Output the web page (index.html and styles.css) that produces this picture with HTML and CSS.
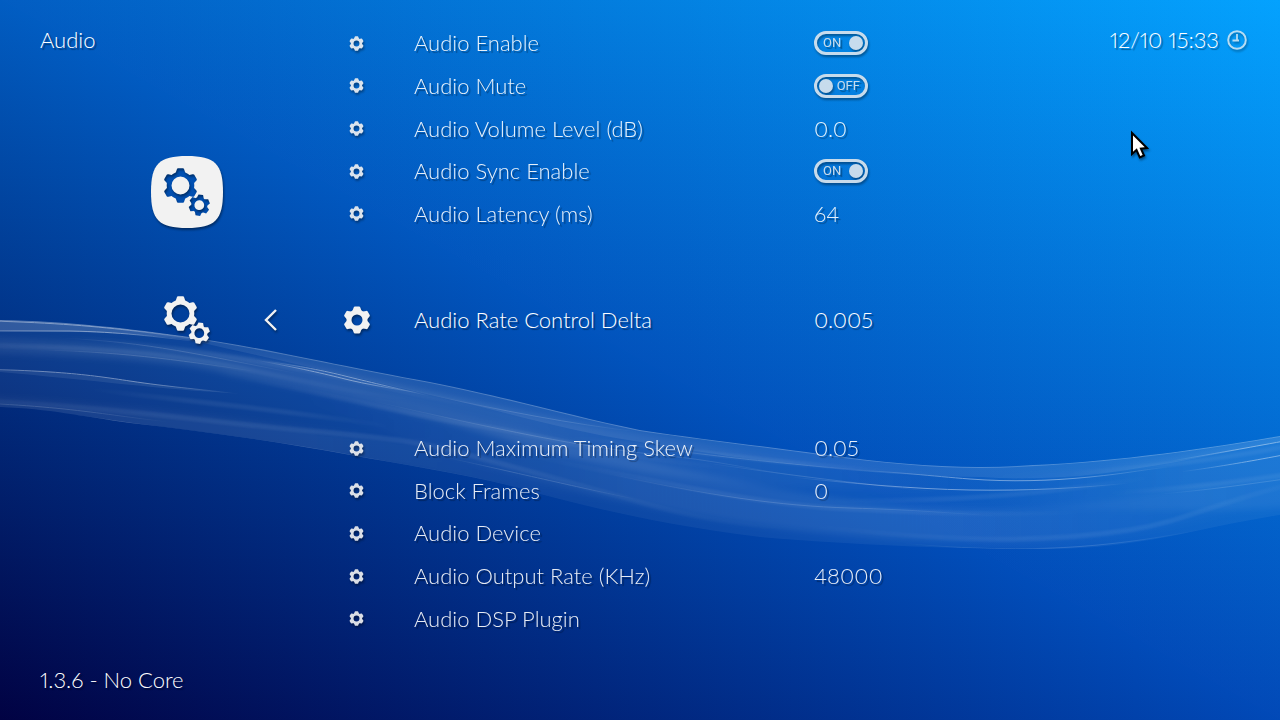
FILE: index.html
```
<!DOCTYPE html>
<html lang="en">
<head>
  <meta charset="UTF-8">
  <meta name="viewport" content="width=device-width, initial-scale=1.0">
  <title>Audio</title>
  <link rel="stylesheet" href="styles.css">
</head>
<body>
  <!-- shared icons -->
  <svg class="defs" aria-hidden="true">
    <symbol id="gear" viewBox="-14 -14 28 28">
      <circle r="8" fill="none" stroke="currentColor" stroke-width="5"/>
      <g fill="currentColor">
        <path id="tooth" d="M-5 -8L-3.300 -12.500Q-3 -13.500 -2 -13.500H2Q3 -13.500 3.300 -12.500L5 -8Z"/>
        <use href="#tooth" transform="rotate(60)"/>
        <use href="#tooth" transform="rotate(120)"/>
        <use href="#tooth" transform="rotate(180)"/>
        <use href="#tooth" transform="rotate(240)"/>
        <use href="#tooth" transform="rotate(300)"/>
      </g>
    </symbol>
    <symbol id="gears" viewBox="-36 -36 72 72">
      <g transform="translate(-6.500 -6.500)">
        <circle r="11.400" fill="none" stroke="currentColor" stroke-width="4.800"/>
        <g fill="currentColor">
          <path id="tooth-l" d="M-5 -12L-3.700 -16Q-3.400 -17.300 -2.400 -17.300H2.400Q3.400 -17.300 3.700 -16L5 -12Z"/>
          <use href="#tooth-l" transform="rotate(60)"/>
          <use href="#tooth-l" transform="rotate(120)"/>
          <use href="#tooth-l" transform="rotate(180)"/>
          <use href="#tooth-l" transform="rotate(240)"/>
          <use href="#tooth-l" transform="rotate(300)"/>
        </g>
      </g>
      <g transform="translate(12.300 13.200) rotate(8)">
        <circle r="6.500" fill="none" stroke="currentColor" stroke-width="3.200"/>
        <g fill="currentColor">
          <path id="tooth-s" d="M-3.500 -7L-2.300 -10.500H2.300L3.500 -7Z"/>
          <use href="#tooth-s" transform="rotate(60)"/>
          <use href="#tooth-s" transform="rotate(120)"/>
          <use href="#tooth-s" transform="rotate(180)"/>
          <use href="#tooth-s" transform="rotate(240)"/>
          <use href="#tooth-s" transform="rotate(300)"/>
        </g>
      </g>
    </symbol>
  </svg>

  <div class="wallpaper" aria-hidden="true">
    <div class="sky sky-low"></div>
    <div class="sky sky-high"></div>
    <svg class="ribbon" viewBox="0 0 1280 720" preserveAspectRatio="none">
      <defs>
        <filter id="soft" x="-5%" y="-20%" width="110%" height="140%"><feGaussianBlur stdDeviation="3"/></filter>
        <filter id="blur" x="-5%" y="-20%" width="110%" height="140%"><feGaussianBlur stdDeviation="1.200"/></filter>
        <linearGradient id="fade">
          <stop offset="0" stop-color="#fff" stop-opacity="0"/>
          <stop offset=".35" stop-color="#fff"/>
          <stop offset=".65" stop-color="#fff"/>
          <stop offset="1" stop-color="#fff" stop-opacity="0"/>
        </linearGradient>
        <clipPath id="wave">
          <path d="M0 320C70 321 130 329 190 337C270 349 330 364 430 382C520 400 570 416 640 430C700 439 770 447 820 454C880 462 930 467 980 467C1090 465 1180 453 1280 436V515C1200 527 1140 549 1050 549C960 549 870 546 760 537C670 526 600 510 540 494C480 476 410 466 350 455C270 440 200 431 130 423C80 416 50 409 0 407Z"/>
        </clipPath>
      </defs>
      <g clip-path="url(#wave)">
        <rect class="haze" width="1280" height="720"/>
        <!-- broad folds -->
        <g filter="url(#soft)" fill="url(#fade)">
          <path opacity=".1" d="M-300 330C-100 330 200 345 300 365C420 389 520 414 640 434C740 452 800 464 960 477L960 490C760 494 640 475 540 450C430 415 330 395 230 375C150 350 -100 352 -300 350Z"/>
          <path opacity=".07" d="M300 375C520 425 640 470 850 500C960 515 1080 515 1280 470V500C1160 535 1060 545 970 541C800 540 640 510 500 470C440 455 380 430 300 400Z"/>
          <path opacity=".05" d="M-300 385C120 395 260 425 400 440C480 450 560 480 640 505L540 494C400 462 200 430 -300 400Z"/>
          <path opacity=".06" d="M980 478C1140 470 1210 450 1280 436L1580 400V480C1400 510 1120 520 980 500Z"/>
        </g>
        <path class="lip" d="M0 320C70 321 130 329 190 337V340C150 335 100 331 0 331Z"/>
        <path class="lip lip-soft" d="M190 337C270 349 330 364 430 382C520 400 570 416 640 430C700 439 770 447 820 454L980 467V477C840 476 700 452 640 442C560 430 500 410 430 395C350 376 290 363 190 340Z"/>
        <path class="lip lip-soft" d="M980 467C1090 465 1180 453 1280 436V442C1210 455 1150 469 1080 476C1040 479 1010 479 980 477Z"/>
        <path class="lip lip-soft" d="M0 369C60 371 110 379 230 393C170 390 90 380 0 372Z"/>
        <!-- strands -->
        <g class="strands wide" filter="url(#blur)">
          <path d="M-150 345C90 342 180 356 240 368S360 394 430 402"/>
          <path d="M50 335C150 343 230 356 300 369S440 402 520 412"/>
          <path d="M220 374C350 398 420 418 480 426S620 460 760 471"/>
          <path d="M80 388C200 403 290 410 400 428"/>
          <path d="M-200 395C90 399 180 420 300 430S430 445 480 458S590 488 650 505S760 528 850 532"/>
          <path d="M500 450C680 486 760 505 850 509S980 516 1100 512"/>
          <path d="M560 436C720 455 780 463 900 472"/>
          <path d="M820 500C940 503 1040 495 1160 476"/>
          <path d="M800 524C960 546 1060 541 1130 530S1220 495 1380 465"/>
          <path d="M1100 494C1200 488 1240 481 1380 462"/>
          <path d="M1060 474C1190 465 1230 457 1380 430"/>
        </g>
        <g class="strands">
          <path d="M-150 405C50 409 80 416 130 423S270 440 350 455S480 476 540 494"/>
          <path d="M-60 402C60 404 110 416 170 422"/>
          <path d="M60 338C150 342 200 355 300 374"/>
          <path d="M40 350C130 352 190 362 260 372"/>
          <path d="M430 395C500 410 570 424 640 432"/>
          <path d="M360 398C520 435 590 448 660 455S760 472 820 479"/>
          <path d="M440 456C540 478 580 488 640 500"/>
          <path d="M600 472C710 496 780 506 850 508S930 512 1000 516"/>
          <path d="M620 444C740 459 800 466 880 471"/>
          <path d="M700 462C780 474 860 484 940 492"/>
          <path d="M900 543C1040 556 1120 545 1200 530"/>
          <path d="M1160 494C1230 488 1250 483 1340 472"/>
        </g>
        <g class="strands bright">
          <path d="M-90 320C70 320 130 330 210 341"/>
          <path d="M-90 331H70C120 332 150 336 210 343"/>
          <path d="M265 361C300 366 325 371 345 376S395 388 430 396"/>
          <path d="M255 360C300 368 325 374 345 379S395 389 420 393"/>
          <path d="M-60 369C50 369 90 375 130 381S190 388 240 394"/>
          <path d="M850 470C900 472 930 476 970 479S1050 481 1090 477S1140 470 1170 467"/>
          <path d="M790 477C850 483 910 489 970 490S1080 488 1130 483"/>
          <path d="M1170 461C1220 453 1250 447 1380 424"/>
          <path d="M1180 472C1230 465 1255 461 1380 436"/>
        </g>
        <path class="rim" d="M0 320C70 321 130 329 190 337C270 349 330 364 430 382C520 400 570 416 640 430C700 439 770 447 820 454C880 462 930 467 980 467C1090 465 1180 453 1280 436"/>
      </g>
    </svg>
  </div>

  <div class="screen">
    <div class="side">
      <h1>Audio</h1>
      <nav class="tabs">
        <button class="tab" aria-label="Settings">
          <svg viewBox="-36 -36 72 72">
            <mask id="cut">
              <rect x="-36" y="-36" width="72" height="72" fill="#fff"/>
              <use class="hole" href="#gears" x="-36" y="-36" width="72" height="72"/>
            </mask>
            <path mask="url(#cut)" fill="currentColor" d="M0 -36C28 -36 36 -28 36 0S28 36 0 36S-36 28 -36 0S-28 -36 0 -36Z"/>
          </svg>
        </button>
        <div class="here">
          <svg class="here-icon"><use href="#gears"/></svg>
          <button class="back" aria-label="Back">
            <svg viewBox="0 0 14 24"><path d="M12 2L2 12L12 22" fill="none" stroke="currentColor" stroke-width="2.400"/></svg>
          </button>
        </div>
      </nav>
      <p class="version">1.3.6 - No Core</p>
    </div>

    <ul class="settings">
      <li>
        <svg class="gear"><use href="#gear"/></svg>
        <label for="enable">Audio Enable</label>
        <span class="switch"><input type="checkbox" id="enable" checked><span class="state">ON</span></span>
      </li>
      <li>
        <svg class="gear"><use href="#gear"/></svg>
        <label for="mute">Audio Mute</label>
        <span class="switch"><input type="checkbox" id="mute"><span class="state">OFF</span></span>
      </li>
      <li>
        <svg class="gear"><use href="#gear"/></svg>
        <span>Audio Volume Level (dB)</span>
        <span>0.0</span>
      </li>
      <li>
        <svg class="gear"><use href="#gear"/></svg>
        <label for="sync">Audio Sync Enable</label>
        <span class="switch"><input type="checkbox" id="sync" checked><span class="state">ON</span></span>
      </li>
      <li>
        <svg class="gear"><use href="#gear"/></svg>
        <span>Audio Latency (ms)</span>
        <span>64</span>
      </li>
      <li class="current">
        <svg class="gear"><use href="#gear"/></svg>
        <span>Audio Rate Control Delta</span>
        <span>0.005</span>
      </li>
      <li>
        <svg class="gear"><use href="#gear"/></svg>
        <span>Audio Maximum Timing Skew</span>
        <span>0.05</span>
      </li>
      <li>
        <svg class="gear"><use href="#gear"/></svg>
        <span>Block Frames</span>
        <span>0</span>
      </li>
      <li>
        <svg class="gear"><use href="#gear"/></svg>
        <span>Audio Device</span>
      </li>
      <li>
        <svg class="gear"><use href="#gear"/></svg>
        <span>Audio Output Rate (KHz)</span>
        <span>48000</span>
      </li>
      <li>
        <svg class="gear"><use href="#gear"/></svg>
        <span>Audio DSP Plugin</span>
      </li>
    </ul>

    <div class="clock">
      <time>12/10 15:33</time>
      <svg viewBox="0 0 20 20"><circle cx="10" cy="10" r="8.800" fill="none" stroke="currentColor" stroke-width="2"/><path d="M10 4V10.500M5.500 10.500H12" fill="none" stroke="currentColor" stroke-width="1.800"/></svg>
    </div>
  </div>

  <svg class="pointer" viewBox="0 0 20 30" aria-hidden="true"><path d="M2 3V24L6.500 20L9.800 27.500L14 25.500L10.900 18.700L17 18Z" fill="#fff" stroke="#000" stroke-width="2"/></svg>
</body>
</html>
```
FILE: styles.css
```
* {
  box-sizing: border-box;
}

body {
  margin: 0;
  min-height: 100vh;
  background-color: #010243;
  color: #fff;
  font-family: Lato, "Open Sans", sans-serif;
  font-size: 22px;
  font-weight: 300;
  font-variant-numeric: proportional-nums;
  line-height: 24px;
  text-shadow: 2px 2px 1px rgba(0, 0, 0, 0.35);
}

button {
  padding: 0;
  border: none;
  background: none;
  color: inherit;
}

svg {
  display: block;
}

.defs {
  position: absolute;
  width: 0;
  height: 0;
}

/* background: each half of the screen adds a horizontal and a vertical ramp */
.wallpaper,
.sky,
.sky::before,
.sky::after,
.ribbon {
  position: absolute;
  inset: 0;
  width: 100%;
  height: 100%;
}

.wallpaper {
  z-index: -1;
  overflow: hidden;
}

.sky {
  isolation: isolate;
}

.sky::before,
.sky::after {
  content: "";
  mix-blend-mode: plus-lighter;
}

.sky-low {
  background-color: #010243;
}

.sky-low::before {
  background: linear-gradient(to right, #000, #004774);
}

.sky-low::after {
  background: linear-gradient(to top, #000, #005b7f);
}

.sky-high {
  background-color: #00047b;
  clip-path: polygon(0 0, 100% 0, 100% 100%);
}

.sky-high::before {
  background: linear-gradient(to right, #000, #02453c);
}

.sky-high::after {
  background: linear-gradient(to top, #000, #025947);
}

.haze {
  fill: rgba(255, 255, 255, 0.05);
}

.lip {
  fill: rgba(255, 255, 255, 0.15);
}

.lip-soft {
  fill: rgba(255, 255, 255, 0.08);
}

.strands {
  fill: none;
  stroke: url(#fade);
  stroke-width: 1px;
  opacity: 0.14;
}

.wide {
  stroke-width: 5px;
  opacity: 0.06;
}

.bright {
  opacity: 0.4;
}

.rim {
  fill: none;
  stroke: rgba(255, 255, 255, 0.2);
  stroke-width: 2px;
}

/* layout */
.screen {
  display: grid;
  grid-template-columns: 328px 1fr auto;
  min-height: 100vh;
}

.side {
  display: flex;
  flex-direction: column;
  padding: 28px 0 28px 40px;
}

h1,
.version {
  margin: 0;
  font-size: 22px;
  font-weight: 300;
}

.version {
  margin-top: auto;
}

.tabs {
  display: flex;
  flex-direction: column;
  align-items: flex-start;
  gap: 56px;
  margin: 104px 0 0 111px;
}

.tab,
.tab svg,
.here-icon {
  width: 72px;
  height: 72px;
}

.tab,
.here,
.gear,
.clock svg {
  color: #f2f2f2;
  filter: drop-shadow(1px 2px 1px rgba(0, 0, 0, 0.4));
}

.hole {
  color: #000;
}

.here {
  display: flex;
  align-items: center;
  gap: 41px;
}

.back svg {
  width: 14px;
  height: 24px;
}

.settings {
  display: grid;
  grid-template-rows: repeat(5, 2fr) 9fr repeat(5, 2fr);
  margin: 0;
  padding: 22px 0 80px;
  list-style: none;
}

.settings li {
  display: grid;
  grid-template-columns: 57px 371px 1fr;
  column-gap: 29px;
  align-items: center;
  opacity: 0.9;
}

.settings .current {
  padding-bottom: 22px;
  opacity: 1;
}

.gear {
  width: 15px;
  height: 15px;
  justify-self: center;
}

.current .gear {
  width: 28px;
  height: 28px;
}

/* on/off switch */
.switch {
  position: relative;
  width: 54px;
  height: 24px;
}

.switch input {
  display: flex;
  align-items: center;
  width: 54px;
  height: 24px;
  margin: 0;
  padding: 0 2px;
  appearance: none;
  border: 3px solid #dde6ee;
  border-radius: 12px;
  filter: drop-shadow(1px 2px 1px rgba(0, 0, 0, 0.4));
}

.switch input:checked {
  justify-content: flex-end;
}

.switch input::before {
  content: "";
  width: 14px;
  height: 14px;
  border-radius: 50%;
  background-color: #dde6ee;
}

.state {
  position: absolute;
  top: 0;
  right: 8px;
  color: #dde6ee;
  font-family: Roboto, sans-serif;
  font-size: 13px;
  font-weight: 400;
  pointer-events: none;
}

input:checked + .state {
  right: auto;
  left: 9px;
}

.clock {
  display: flex;
  align-items: center;
  align-self: start;
  gap: 8px;
  padding: 28px 33px 0 0;
}

.clock svg {
  width: 20px;
  height: 20px;
  opacity: 0.75;
}

.pointer {
  position: absolute;
  top: 130px;
  left: 1130px;
  width: 20px;
  height: 30px;
  filter: drop-shadow(1px 2px 1px rgba(0, 0, 0, 0.4));
}
```
